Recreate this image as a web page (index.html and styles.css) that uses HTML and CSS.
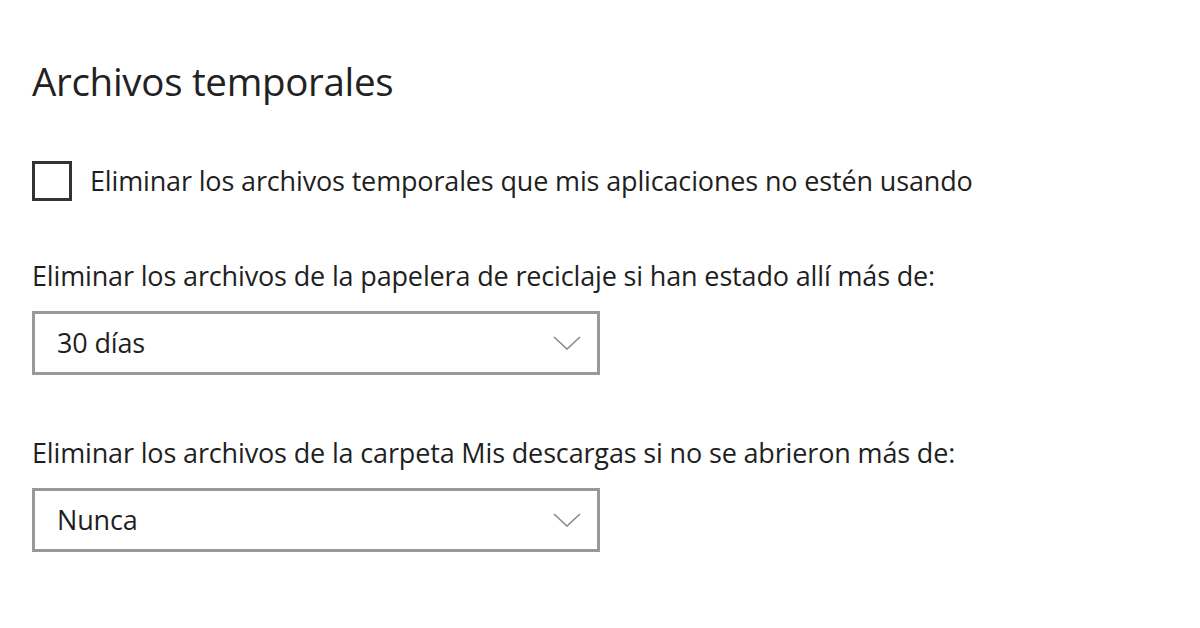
FILE: index.html
```html
<!DOCTYPE html>
<html lang="es">
<head>
    <meta charset="UTF-8">
    <title>Archivos temporales</title>
    <link rel="stylesheet" href="styles.css">
</head>
<body>
    <div class="settings">
        <h1 class="title">Archivos temporales</h1>

        <label class="check-row">
            <span class="checkbox"></span>
            <span class="check-text">Eliminar los archivos temporales que mis aplicaciones no estén usando</span>
        </label>

        <div class="field first">
            <p class="field-label">Eliminar los archivos de la papelera de reciclaje si han estado allí más de:</p>
            <div class="dropdown">
                <span>30 días</span>
                <svg class="chevron" width="28" height="14" viewBox="0 0 28 14"><path d="M1 1 L14 13 L27 1" fill="none" stroke="#8a8a8a" stroke-width="1.6"/></svg>
            </div>
        </div>

        <div class="field">
            <p class="field-label">Eliminar los archivos de la carpeta Mis descargas si no se abrieron más de:</p>
            <div class="dropdown">
                <span>Nunca</span>
                <svg class="chevron" width="28" height="14" viewBox="0 0 28 14"><path d="M1 1 L14 13 L27 1" fill="none" stroke="#8a8a8a" stroke-width="1.6"/></svg>
            </div>
        </div>
    </div>
</body>
</html>
```

FILE: styles.css
```css
body {
    margin: 0;
    background: #ffffff;
    color: #1f1f1f;
    font-family: "Open Sans", "Noto Sans", sans-serif;
}

.settings {
    padding: 56px 0 0 32px;
}

.title {
    margin: 0;
    font-size: 38.5px;
    font-weight: 400;
    line-height: 50px;
    letter-spacing: -0.3px;
    color: #222;
}

.check-row {
    display: flex;
    align-items: center;
    gap: 18px;
    margin-top: 55px;
}

.checkbox {
    width: 34px;
    height: 34px;
    border: 3px solid #333;
}

.check-text,
.field-label,
.dropdown span {
    font-size: 27px;
    letter-spacing: -0.15px;
    line-height: 36px;
}

.field {
    margin-top: 57px;
}

.field + .field {
    margin-top: 60px;
}

.field-label {
    margin: 0 0 17px;
}

.dropdown {
    width: 524px;
    height: 58px;
    border: 3px solid #999;
    display: flex;
    align-items: center;
    justify-content: space-between;
    padding: 0 16px 0 22px;
}
```
